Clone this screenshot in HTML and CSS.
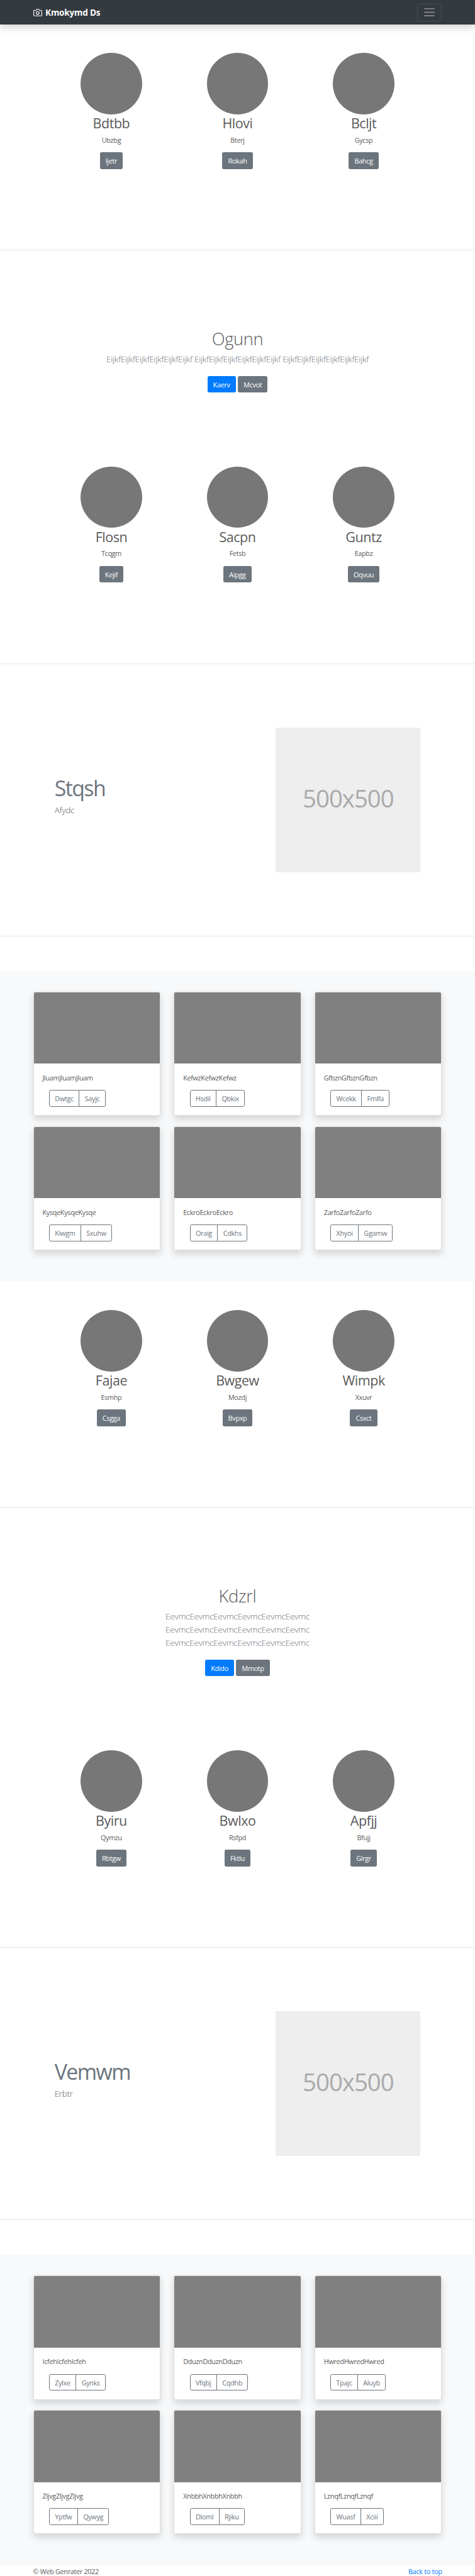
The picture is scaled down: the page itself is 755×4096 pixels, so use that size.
FILE: index.html
```
<!DOCTYPE html>
<html lang="en">
<head>
<meta charset="utf-8">
<title>Kmokymd Ds</title>
<link rel="stylesheet" href="styles.css">
</head>
<body>
<header class="navbar">
  <div class="container navbar-row">
    <a class="brand">
      <svg class="brand-icon" viewBox="0 0 24 24" fill="none" stroke="currentColor" stroke-width="2" stroke-linecap="round" stroke-linejoin="round"><path d="M23 19a2 2 0 0 1-2 2H3a2 2 0 0 1-2-2V8a2 2 0 0 1 2-2h4l2-3h6l2 3h4a2 2 0 0 1 2 2z"/><circle cx="12" cy="13" r="4"/></svg>
      <strong>Kmokymd Ds</strong>
    </a>
    <button class="toggler" aria-label="Menu">
      <svg class="toggler-icon" viewBox="0 0 30 30" stroke="currentColor" stroke-width="2" stroke-linecap="round" stroke-miterlimit="10"><path d="M4 7h22M4 15h22M4 23h22"/></svg>
    </button>
  </div>
</header>
<main>
  <section class="people">
    <div class="person"><div class="avatar"></div><h2>Bdtbb</h2><p>Ubzbg</p><a class="btn">Ijetr</a></div>
    <div class="person"><div class="avatar"></div><h2>Hlovi</h2><p>Bterj</p><a class="btn">Rokah</a></div>
    <div class="person"><div class="avatar"></div><h2>Bcljt</h2><p>Gycsp</p><a class="btn">Bahcg</a></div>
  </section>
  <hr class="divider">
  <section class="hero">
    <h1>Ogunn</h1>
    <p class="lead muted">EijkfEijkfEijkfEijkfEijkfEijkf EijkfEijkfEijkfEijkfEijkfEijkf EijkfEijkfEijkfEijkfEijkfEijkf</p>
    <div class="actions"><a class="btn primary">Kaerv</a><a class="btn">Mcvot</a></div>
  </section>
  <section class="people">
    <div class="person"><div class="avatar"></div><h2>Flosn</h2><p>Tcqgm</p><a class="btn">Kejif</a></div>
    <div class="person"><div class="avatar"></div><h2>Sacpn</h2><p>Fetsb</p><a class="btn">Aipgg</a></div>
    <div class="person"><div class="avatar"></div><h2>Guntz</h2><p>Eapbz</p><a class="btn">Oqvuu</a></div>
  </section>
  <hr class="divider">
  <section class="featurette">
    <div class="feature-text"><h2>Stqsh</h2><p class="lead">Afydc</p></div>
    <div class="placeholder"><span>500x500</span></div>
  </section>
  <hr class="divider">
  <section class="album">
    <div class="container cards">
      <article class="card"><div class="thumb"></div><div class="card-body"><p>JluamJluamJluam</p><div class="group"><a>Dwtgc</a><a>Sayjc</a></div></div></article>
      <article class="card"><div class="thumb"></div><div class="card-body"><p>KefwzKefwzKefwz</p><div class="group"><a>Hsdil</a><a>Qbkix</a></div></div></article>
      <article class="card"><div class="thumb"></div><div class="card-body"><p>GfbznGfbznGfbzn</p><div class="group"><a>Wcekk</a><a>Fmlfa</a></div></div></article>
      <article class="card"><div class="thumb"></div><div class="card-body"><p>KysqeKysqeKysqe</p><div class="group"><a>Kiwgm</a><a>Sxuhw</a></div></div></article>
      <article class="card"><div class="thumb"></div><div class="card-body"><p>EckroEckroEckro</p><div class="group"><a>Oraig</a><a>Cdkhs</a></div></div></article>
      <article class="card"><div class="thumb"></div><div class="card-body"><p>ZarfoZarfoZarfo</p><div class="group"><a>Xhyoi</a><a>Ggamw</a></div></div></article>
    </div>
  </section>
  <section class="people">
    <div class="person"><div class="avatar"></div><h2>Fajae</h2><p>Esmhp</p><a class="btn">Csgga</a></div>
    <div class="person"><div class="avatar"></div><h2>Bwgew</h2><p>Mozdj</p><a class="btn">Bvpxp</a></div>
    <div class="person"><div class="avatar"></div><h2>Wimpk</h2><p>Xxuvr</p><a class="btn">Csxct</a></div>
  </section>
  <hr class="divider">
  <section class="hero">
    <h1>Kdzrl</h1>
    <p class="lead muted">EevmcEevmcEevmcEevmcEevmcEevmc<br>EevmcEevmcEevmcEevmcEevmcEevmc<br>EevmcEevmcEevmcEevmcEevmcEevmc</p>
    <div class="actions"><a class="btn primary">Kdido</a><a class="btn">Mmotp</a></div>
  </section>
  <section class="people">
    <div class="person"><div class="avatar"></div><h2>Byiru</h2><p>Qymzu</p><a class="btn">Rbtgw</a></div>
    <div class="person"><div class="avatar"></div><h2>Bwlxo</h2><p>Rsfpd</p><a class="btn">Fktlu</a></div>
    <div class="person"><div class="avatar"></div><h2>Apfjj</h2><p>Bfujj</p><a class="btn">Glrgr</a></div>
  </section>
  <hr class="divider">
  <section class="featurette">
    <div class="feature-text"><h2>Vemwm</h2><p class="lead">Erbtr</p></div>
    <div class="placeholder"><span>500x500</span></div>
  </section>
  <hr class="divider">
  <section class="album">
    <div class="container cards">
      <article class="card"><div class="thumb"></div><div class="card-body"><p>IcfehIcfehIcfeh</p><div class="group"><a>Zylxe</a><a>Gynks</a></div></div></article>
      <article class="card"><div class="thumb"></div><div class="card-body"><p>DduznDduznDduzn</p><div class="group"><a>Vfqbj</a><a>Cqdhb</a></div></div></article>
      <article class="card"><div class="thumb"></div><div class="card-body"><p>HwredHwredHwred</p><div class="group"><a>Tpajc</a><a>Aluyb</a></div></div></article>
      <article class="card"><div class="thumb"></div><div class="card-body"><p>ZljvgZljvgZljvg</p><div class="group"><a>Yptfw</a><a>Qywyg</a></div></div></article>
      <article class="card"><div class="thumb"></div><div class="card-body"><p>XnbbhXnbbhXnbbh</p><div class="group"><a>Dloml</a><a>Rjiku</a></div></div></article>
      <article class="card"><div class="thumb"></div><div class="card-body"><p>LznqfLznqfLznqf</p><div class="group"><a>Wuasf</a><a>Xciii</a></div></div></article>
    </div>
  </section>
</main>
<footer class="container footer"><span>© Web Genrater 2022</span><a class="link">Back to top</a></footer>
</body>
</html>
```
FILE: styles.css
```
/* --u is one design pixel; the layout is drawn on a 1080-unit wide grid */
:root { --u: 0.69883px; }
* { box-sizing: border-box; margin: 0; padding: 0; }
body {
  background: #fff;
  color: #5a5a5a;
  font-family: "Open Sans", "Noto Sans", sans-serif;
  font-size: calc(15.5 * var(--u));
  line-height: calc(24 * var(--u));
  letter-spacing: -0.029em;
  overflow-x: hidden;
}
.container { width: calc(930 * var(--u)); margin: 0 auto; }
.navbar {
  height: calc(56 * var(--u));
  background: #343a40;
  box-shadow: 0 calc(8 * var(--u)) calc(16 * var(--u)) rgba(0, 0, 0, .15);
}
.navbar-row { height: 100%; display: flex; align-items: center; justify-content: space-between; }
.brand { display: flex; align-items: center; gap: calc(8 * var(--u)); color: #fff; font-size: calc(19.5 * var(--u)); letter-spacing: -0.015em; }
.brand strong { font-weight: 700; padding-top: calc(2 * var(--u)); }
.brand-icon { width: calc(20 * var(--u)); height: calc(20 * var(--u)); }
.toggler {
  width: calc(56 * var(--u)); height: calc(40 * var(--u));
  display: flex; align-items: center; justify-content: center;
  background: none; color: rgba(255, 255, 255, .5);
  border: 1px solid rgba(255, 255, 255, .1); border-radius: calc(4 * var(--u));
}
.toggler-icon { flex: none; width: calc(30 * var(--u)); height: calc(30 * var(--u)); }

.people { display: flex; justify-content: center; padding-top: calc(64 * var(--u)); height: calc(512.5 * var(--u)); }
.person { width: calc(287 * var(--u)); text-align: center; }
.avatar { width: calc(140 * var(--u)); height: calc(140 * var(--u)); margin: 0 auto; border-radius: 50%; background: #777; }
.person h2 {
  padding-top: calc(1.6 * var(--u)); margin-bottom: calc(6.4 * var(--u));
  font-size: calc(30.8 * var(--u)); line-height: calc(38.4 * var(--u));
  font-weight: 400; letter-spacing: -0.022em;
}
.person p { padding-top: calc(1 * var(--u)); margin-bottom: calc(15 * var(--u)); }
.btn {
  display: inline-block; height: calc(38 * var(--u)); padding: 0 calc(13 * var(--u));
  line-height: calc(39.4 * var(--u)); vertical-align: top;
  border-radius: calc(4 * var(--u)); background: #6c757d; color: #fff;
}
.btn.primary { background: #007bff; }
.divider { border: 0; height: 1px; background: #e5e5e5; }

.hero { padding: calc(176.8 * var(--u)) 0 calc(104 * var(--u)); text-align: center; }
.hero h1 { font-size: calc(39 * var(--u)); line-height: calc(48 * var(--u)); font-weight: 300; letter-spacing: -0.012em; margin-bottom: calc(7.5 * var(--u)); }
.lead { font-size: calc(19.4 * var(--u)); line-height: calc(30 * var(--u)); font-weight: 300; letter-spacing: -0.021em; }
.muted { color: #6c757d; }
.actions { display: flex; justify-content: center; gap: calc(5 * var(--u)); margin-top: calc(23 * var(--u)); }

.featurette {
  height: calc(617.5 * var(--u)); padding: 0 calc(124 * var(--u));
  display: flex; align-items: center; justify-content: space-between;
}
.feature-text { padding-bottom: calc(17 * var(--u)); }
.featurette h2 { font-size: calc(48.5 * var(--u)); line-height: calc(60 * var(--u)); font-weight: 400; color: #6c757d; letter-spacing: -0.046em; margin-bottom: calc(3.5 * var(--u)); }
.placeholder {
  width: calc(329 * var(--u)); height: calc(329 * var(--u)); background: #eee; color: #aaa;
  padding-bottom: calc(8 * var(--u));
  display: flex; align-items: center; justify-content: center;
}
.placeholder span { font-size: calc(55 * var(--u)); line-height: 1; letter-spacing: -0.027em; }

.album { margin-top: calc(79 * var(--u)); padding: calc(48 * var(--u)) 0 calc(72 * var(--u)); background: #f8f9fa; }
.cards { display: grid; grid-template-columns: repeat(3, 1fr); gap: calc(24 * var(--u)) calc(30 * var(--u)); }
.card {
  height: calc(282 * var(--u)); background: #fff; border: 1px solid rgba(0, 0, 0, .125);
  border-radius: calc(4 * var(--u));
  box-shadow: 0 calc(8 * var(--u)) calc(16 * var(--u)) rgba(0, 0, 0, .15);
}
.thumb { height: calc(162 * var(--u)); background: #808080; border-radius: calc(3 * var(--u)) calc(3 * var(--u)) 0 0; }
.card-body { padding: calc(20 * var(--u)); }
.card-body p { padding-top: calc(1 * var(--u)); margin-bottom: calc(15 * var(--u)); }
.group { display: flex; margin-left: calc(15 * var(--u)); color: #6c757d; }
.group a { height: calc(38 * var(--u)); line-height: calc(37 * var(--u)); padding: 0 calc(12 * var(--u)); border: 1px solid #6c757d; }
.group a:first-child { border-radius: calc(4 * var(--u)) 0 0 calc(4 * var(--u)); }
.group a:last-child { margin-left: -1px; border-radius: 0 calc(4 * var(--u)) calc(4 * var(--u)) 0; }
.footer { display: flex; justify-content: space-between; height: calc(23.5 * var(--u)); line-height: calc(25 * var(--u)); }
.link { color: #007bff; }
```
